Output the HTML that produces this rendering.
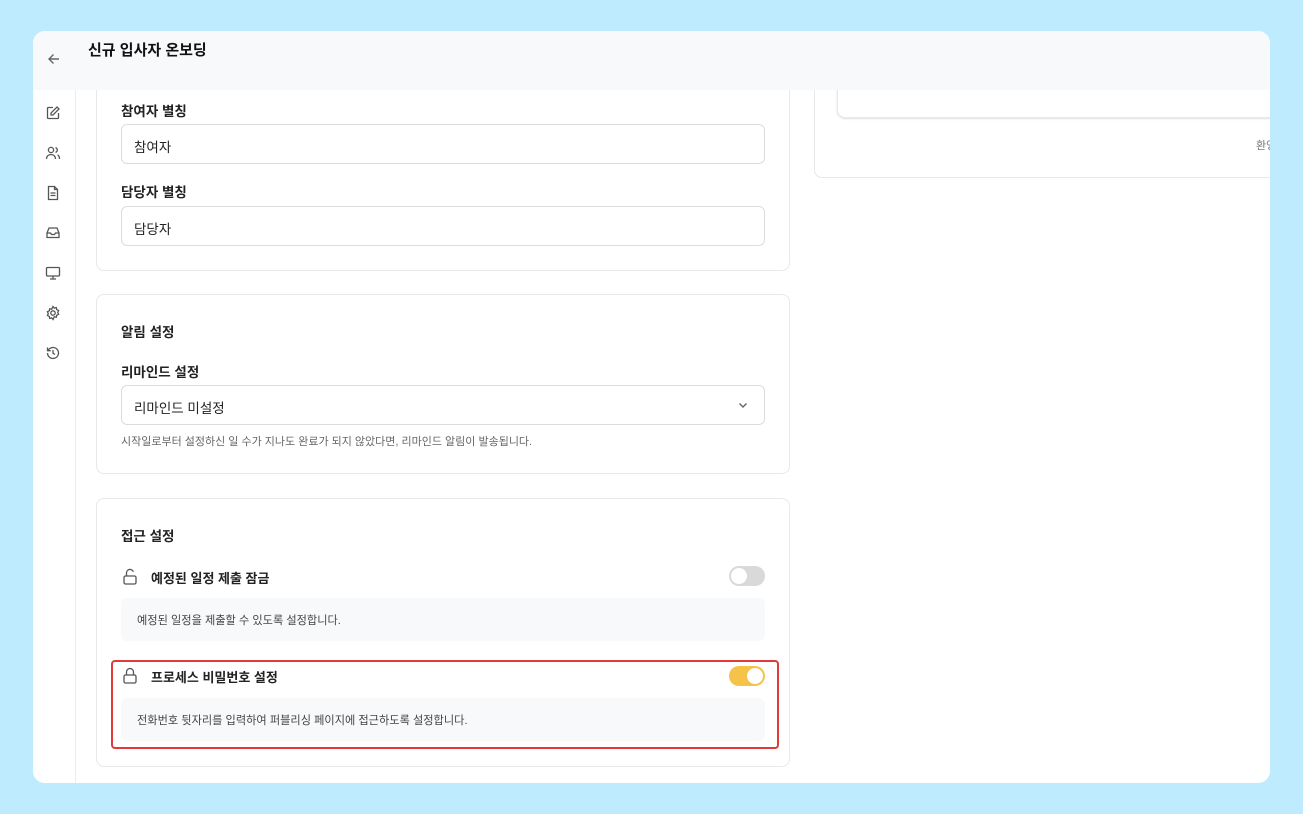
<!DOCTYPE html>
<html><head><meta charset="utf-8"><style>
*{box-sizing:border-box;margin:0;padding:0}
body{width:1303px;height:814px;background:#beebfd;font-family:"Liberation Sans","Noto Sans CJK KR",sans-serif;color:#222;position:relative;overflow:hidden}
.win{position:absolute;left:33px;top:31px;width:1237px;height:752px;background:#fff;border-radius:12px;overflow:hidden}
.hdr{position:absolute;left:0;top:0;width:100%;height:59px;background:#f8f9fa;z-index:2}
.side{position:absolute;left:0;top:59px;width:43px;bottom:0;border-right:1px solid #ececec;background:#fff}
.abs{position:absolute;white-space:nowrap}
.card{position:absolute;border:1px solid #e8e8e8;border-radius:8px;background:#fff}
.lbl{position:absolute;font-size:13.5px;font-weight:bold;color:#222;white-space:nowrap}
.inp{position:absolute;left:88px;width:644px;height:40px;border:1px solid #dcdcdc;border-radius:6px;font-size:13.5px;padding:11px 12px;color:#222}
.help{position:absolute;font-size:11px;color:#666;white-space:nowrap}
.box{position:absolute;left:88px;width:644px;height:43px;background:#f8f9fb;border-radius:6px;font-size:11.2px;color:#444;padding:14px 16px;white-space:nowrap}
.tg{position:absolute;width:36px;height:20px;border-radius:10px}
.tg i{position:absolute;top:2px;width:16px;height:16px;border-radius:50%;background:#fff}
svg{position:absolute}
</style></head><body>
<div class="win">
<div class="hdr">
<svg style="left:13px;top:20px" width="16" height="16" viewBox="0 0 16 16" fill="none" stroke="#666" stroke-width="1.4"><path d="M13 8H3M7.5 3.5L3 8l4.5 4.5"/></svg>
<div class="abs" style="left:55px;top:8px;font-size:15px;font-weight:bold;color:#111">신규 입사자 온보딩</div>
</div>
<div class="side">
<svg style="left:12px;top:15px" width="16" height="16" viewBox="0 0 16 16" fill="none" stroke="#555" stroke-width="1.3"><path d="M8 2.5H3.5a1 1 0 0 0-1 1v9a1 1 0 0 0 1 1h9a1 1 0 0 0 1-1V8"/><path d="M12 2l2 2-6 6H6V8z"/></svg>
<svg style="left:12px;top:55px" width="16" height="16" viewBox="0 0 16 16" fill="none" stroke="#555" stroke-width="1.3"><circle cx="6" cy="5" r="2.6"/><path d="M1.5 14c0-2.8 2-4.5 4.5-4.5s4.5 1.7 4.5 4.5M10.5 2.6a2.5 2.5 0 0 1 0 4.8M12.5 9.8c1.3.6 2 2 2 4.2"/></svg>
<svg style="left:12px;top:95px" width="16" height="16" viewBox="0 0 16 16" fill="none" stroke="#555" stroke-width="1.3"><path d="M3.5 1.5h6l3 3v10h-9z"/><path d="M9.5 1.5v3h3M5.5 8h5M5.5 10.5h5"/></svg>
<svg style="left:12px;top:135px" width="16" height="16" viewBox="0 0 16 16" fill="none" stroke="#555" stroke-width="1.3"><path d="M2 8l2-5h8l2 5v4.5H2z"/><path d="M2 8h3.5l1 1.5h3l1-1.5H14"/></svg>
<svg style="left:12px;top:175px" width="16" height="16" viewBox="0 0 16 16" fill="none" stroke="#555" stroke-width="1.3"><rect x="1.5" y="2.5" width="13" height="8.5" rx="1"/><path d="M8 11v3M5 14h6"/></svg>
<svg style="left:12px;top:215px" width="16" height="16" viewBox="0 0 16 16" fill="none" stroke="#555" stroke-width="1.3"><circle cx="8" cy="8" r="2.2"/><path d="M8 1.5l1.3 1.6 2-.5.4 2 1.9.9-.9 1.9.9 1.9-1.9.9-.4 2-2-.5L8 14.5l-1.3-1.6-2 .5-.4-2-1.9-.9.9-1.9-.9-1.9 1.9-.9.4-2 2 .5z"/></svg>
<svg style="left:12px;top:255px" width="16" height="16" viewBox="0 0 16 16" fill="none" stroke="#555" stroke-width="1.3"><path d="M2.5 8a5.5 5.5 0 1 0 1.6-3.9L2.5 5.7"/><path d="M2.5 2.5v3.2h3.2M8 5v3.2l2 1.3"/></svg>
</div>
<div class="card" style="left:63px;top:20px;width:694px;height:220px"></div>
<div class="lbl" style="left:88px;top:69px">참여자 별칭</div>
<div class="inp" style="top:93px">참여자</div>
<div class="lbl" style="left:88px;top:150px">담당자 별칭</div>
<div class="inp" style="top:175px">담당자</div>
<div class="card" style="left:781px;top:20px;width:480px;height:127px"></div>
<div class="card" style="left:804px;top:20px;width:460px;height:67px;box-shadow:0 1px 2px rgba(0,0,0,.12)"></div>
<div class="abs" style="left:1223px;top:106px;font-size:11px;color:#777">환영</div>
<div class="card" style="left:63px;top:263px;width:694px;height:180px"></div>
<div class="lbl" style="left:88px;top:290px">알림 설정</div>
<div class="lbl" style="left:88px;top:330px">리마인드 설정</div>
<div class="inp" style="top:354px">리마인드 미설정</div>
<svg style="left:704px;top:368px" width="12" height="12" viewBox="0 0 12 12" fill="none" stroke="#666" stroke-width="1.4"><path d="M2.5 4.5L6 8l3.5-3.5"/></svg>
<div class="help" style="left:88px;top:402px">시작일로부터 설정하신 일 수가 지나도 완료가 되지 않았다면, 리마인드 알림이 발송됩니다.</div>
<div class="card" style="left:63px;top:467px;width:694px;height:269px"></div>
<div class="lbl" style="left:88px;top:494px">접근 설정</div>
<svg style="left:89px;top:537px" width="16" height="17" viewBox="0 0 16 17" fill="none" stroke="#555" stroke-width="1.3"><rect x="2" y="8" width="12" height="8" rx="1.5"/><path d="M4.5 8V5a3.5 3.5 0 0 1 6.8-1.2"/></svg>
<div class="lbl" style="left:118px;top:537px;font-size:13px">예정된 일정 제출 잠금</div>
<div class="tg" style="left:696px;top:535px;background:#d9d9d9"><i style="left:2px"></i></div>
<div class="box" style="top:567px">예정된 일정을 제출할 수 있도록 설정합니다.</div>
<div class="abs" style="left:78px;top:629px;width:668px;height:89px;border:2px solid #e23a3a;border-radius:4px"></div>
<svg style="left:89px;top:636px" width="16" height="17" viewBox="0 0 16 17" fill="none" stroke="#555" stroke-width="1.3"><rect x="2" y="8" width="12" height="8" rx="1.5"/><path d="M4.5 8V5a3.5 3.5 0 0 1 7 0v3"/></svg>
<div class="lbl" style="left:118px;top:636px;font-size:13px">프로세스 비밀번호 설정</div>
<div class="tg" style="left:696px;top:635px;background:#f5c24a"><i style="left:18px"></i></div>
<div class="box" style="top:667px">전화번호 뒷자리를 입력하여 퍼블리싱 페이지에 접근하도록 설정합니다.</div>
</div>
</body></html>
